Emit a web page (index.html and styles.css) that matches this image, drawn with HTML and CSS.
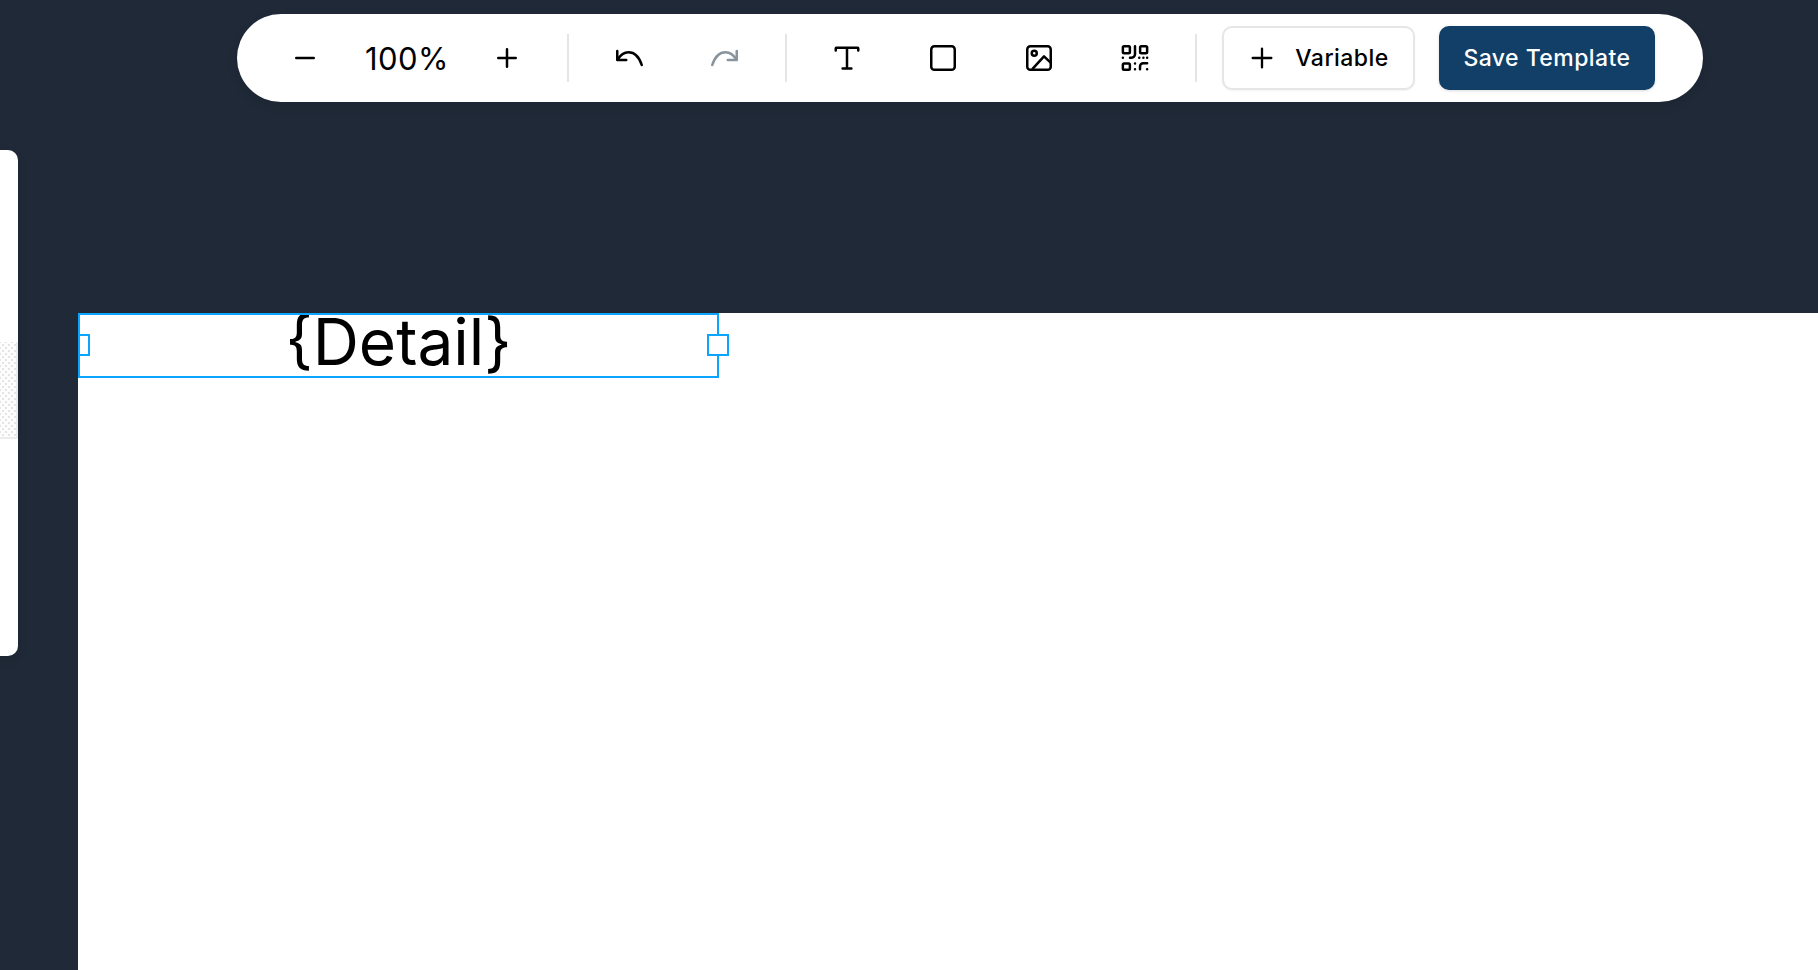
FILE: index.html
```html
<!DOCTYPE html>
<html lang="en">
<head>
<meta charset="utf-8">
<title>Template Editor</title>
<link rel="stylesheet" href="styles.css">
</head>
<body>
<div class="editor">
  <aside class="side-panel"><div class="side-stripe"></div></aside>
  <header class="toolbar">
    <button class="icon-btn"><svg class="icon" viewBox="0 0 24 24"><path d="M5 12h14"/></svg></button>
    <span class="zoom-value">100%</span>
    <button class="icon-btn"><svg class="icon" viewBox="0 0 24 24"><path d="M12 5v14M5 12h14"/></svg></button>
    <span class="divider"></span>
    <button class="icon-btn"><svg class="icon" viewBox="0 0 24 24"><path d="M2.600 6.400v7.200h7.200"/><path d="M3 13.200C5.200 9.300 8.200 7.300 11.600 7.300c4.800 0 8.600 3.900 10.600 10.300"/></svg></button>
    <button class="icon-btn muted"><svg class="icon" viewBox="0 0 24 24"><path d="M21.400 6.400v7.200h-7.200"/><path d="M21 13.200C18.800 9.300 15.800 7.300 12.400 7.300c-4.800 0-8.600 3.900-10.600 10.300"/></svg></button>
    <span class="divider"></span>
    <button class="icon-btn"><svg class="icon" viewBox="0 0 24 24"><path d="M3 6V4.200a.500.500 0 0 1 .500-.500h17a.500.500 0 0 1 .500.500V6M12 3.700v16.600M8.500 20.300h7"/></svg></button>
    <button class="icon-btn"><svg class="icon" viewBox="0 0 24 24"><rect x="2.600" y="2.600" width="18.800" height="18.800" rx="2.500"/></svg></button>
    <button class="icon-btn"><svg class="icon" viewBox="0 0 24 24"><rect x="2.600" y="2.600" width="18.800" height="18.800" rx="2.500"/><circle cx="8.200" cy="8.200" r="2"/><path d="M7 20.500l9-9.800 5.300 5"/></svg></button>
    <button class="icon-btn"><svg class="icon" viewBox="0 0 24 24"><rect x="2.300" y="2.500" width="5.600" height="5.600" rx="1"/><rect x="16.100" y="2.500" width="5.600" height="5.600" rx="1"/><rect x="2.300" y="16.300" width="5.600" height="5" rx="1"/><path d="M12 2.500V9a2.700 2.700 0 0 1-2.700 2.700H8M2.300 11.700h.01M15.400 11.700h.01M18.700 11.700h.01M21.700 11.700h.01M12 16.300h.01M12 21h.01M16 21v-2.300a2.500 2.500 0 0 1 2.500-2.500h3.200M21.700 21h.01"/></svg></button>
    <span class="divider last"></span>
    <button class="btn-variable"><svg class="icon" viewBox="0 0 24 24"><path d="M12 4v16M4 12h16"/></svg><span>Variable</span></button>
    <button class="btn-save">Save Template</button>
  </header>
  <main class="page">
    <div class="text-box">
      <span class="text-content">{Detail}</span>
      <span class="handle handle-left"></span>
      <span class="handle handle-right"></span>
    </div>
  </main>
</div>
</body>
</html>
```
FILE: styles.css
```css
* { box-sizing: border-box; }
html, body { margin: 0; height: 100%; }
body { background: #1f2937; font-family: Inter, "Liberation Sans", sans-serif; overflow: hidden; }
.editor { position: relative; height: 100%; display: flex; flex-direction: column; padding: 313px 0 0 78px; }
.toolbar {
  position: absolute; top: 14px; left: 237px; width: 1466px; height: 88px;
  display: flex; align-items: center; padding-left: 44px;
  background: #fff; border-radius: 44px;
  box-shadow: 0 4px 12px rgba(0, 0, 0, 0.08);
}
.icon-btn { width: 48px; height: 48px; padding: 0; border: 0; background: none; color: #000; display: flex; align-items: center; justify-content: center; }
.icon-btn + .icon-btn { margin-left: 48px; }
.icon-btn.muted { color: #8a949c; }
.icon { width: 30px; height: 30px; fill: none; stroke: currentColor; stroke-width: 2; stroke-linecap: round; stroke-linejoin: round; }
.zoom-value { width: 154px; padding-left: 2px; text-align: center; font-size: 31px; letter-spacing: 0.4px; color: #000; }
.divider { width: 2px; height: 48px; background: #e3e5e8; margin: 0 36px; }
.divider.last { margin-right: 25px; }
.btn-variable {
  width: 193px; height: 64px; display: flex; align-items: center; justify-content: center; gap: 19px;
  background: #fff; border: 2px solid #e6e6e6; border-radius: 10px; color: #000;
  font: 500 23px Inter, "Liberation Sans", sans-serif; letter-spacing: 0.45px;
  box-shadow: 0 1px 2px rgba(0, 0, 0, 0.05);
}
.btn-variable .icon { width: 28px; height: 28px; }
.btn-save {
  width: 216px; height: 64px; margin-left: 24px; border: 0; border-radius: 10px; background: #113f67; color: #fff;
  font: 500 23px Inter, "Liberation Sans", sans-serif; letter-spacing: 0.45px;
  box-shadow: 0 1px 3px rgba(0, 0, 0, 0.15);
}
.side-panel { position: absolute; left: 0; top: 150px; width: 18px; height: 506px; background: #fff; border-radius: 0 10px 10px 0; box-shadow: 0 4px 12px rgba(0, 0, 0, 0.08); }
.side-stripe {
  margin-top: 192px; height: 97px; border-right: 2px solid #ececec; border-bottom: 2px solid #ececec;
  background-color: #fdfdfd;
  background-image: radial-gradient(#e4e4e4 0.7px, transparent 1px), radial-gradient(#e4e4e4 0.7px, transparent 1px);
  background-size: 6px 6px;
  background-position: 0 0, 3px 3px;
}
.page { flex: 1; position: relative; background: #fff; }
.text-box { position: absolute; left: 0; top: 0; width: 641px; height: 65px; border: 2px solid #0aa5ff; display: flex; justify-content: center; }
.text-content { font-size: 64px; line-height: 54px; color: #000; height: 61px; overflow: hidden; }
.handle { position: absolute; top: 19px; height: 22px; background: #fff; border: 2px solid #0aa5ff; }
.handle-left { left: -2px; width: 12px; }
.handle-right { right: -12px; width: 22px; }
```
